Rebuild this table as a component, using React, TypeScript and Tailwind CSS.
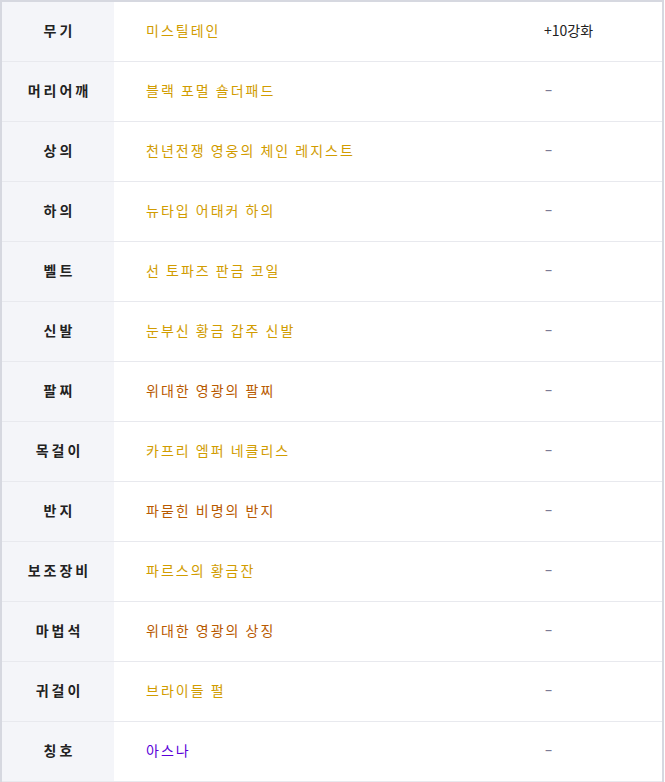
const rows: { slot: string; name: string; color: string; extra: string }[] = [
  { slot: "무기", name: "미스틸테인", color: "text-[#d19c00]", extra: "+10강화" },
  { slot: "머리어깨", name: "블랙 포멀 숄더패드", color: "text-[#d19c00]", extra: "-" },
  { slot: "상의", name: "천년전쟁 영웅의 체인 레지스트", color: "text-[#d19c00]", extra: "-" },
  { slot: "하의", name: "뉴타입 어태커 하의", color: "text-[#d19c00]", extra: "-" },
  { slot: "벨트", name: "선 토파즈 판금 코일", color: "text-[#d19c00]", extra: "-" },
  { slot: "신발", name: "눈부신 황금 갑주 신발", color: "text-[#d19c00]", extra: "-" },
  { slot: "팔찌", name: "위대한 영광의 팔찌", color: "text-[#b85a00]", extra: "-" },
  { slot: "목걸이", name: "카프리 엠퍼 네클리스", color: "text-[#d19c00]", extra: "-" },
  { slot: "반지", name: "파묻힌 비명의 반지", color: "text-[#b85a00]", extra: "-" },
  { slot: "보조장비", name: "파르스의 황금잔", color: "text-[#d19c00]", extra: "-" },
  { slot: "마법석", name: "위대한 영광의 상징", color: "text-[#b85a00]", extra: "-" },
  { slot: "귀걸이", name: "브라이들 펄", color: "text-[#d19c00]", extra: "-" },
  { slot: "칭호", name: "아스나", color: "text-[#5a00d8]", extra: "-" },
];

export default function App() {
  return (
    <div
      className="w-[664px] bg-white border-t-2 border-l-2 border-r-2 border-[#d6d8e0] text-[14px]"
      style={{ fontFamily: '"Noto Sans CJK KR", "Noto Sans", sans-serif' }}
    >
      {rows.map((r) => (
        <div key={r.slot} className="flex h-[60px] border-b border-[#e8e9ee]">
          <div className="w-[112px] bg-[#f4f5f9] flex items-center justify-center pb-[3px] pl-[3px] font-bold text-[#222] tracking-[3px]">
            {r.slot}
          </div>
          <div className={`flex-1 flex items-center pl-[32px] pb-[3px] tracking-[2px] ${r.color}`}>
            {r.name}
          </div>
          <div
            className={`w-[118px] flex items-center pb-[3px] ${
              r.extra === "-" ? "text-[#7c7a94]" : "text-[#222]"
            }`}
          >
            {r.extra === "-" ? (
              <span className="inline-block font-['DejaVu_Sans'] ml-[2px] scale-x-[1.6]">-</span>
            ) : (
              r.extra
            )}
          </div>
        </div>
      ))}
    </div>
  );
}
